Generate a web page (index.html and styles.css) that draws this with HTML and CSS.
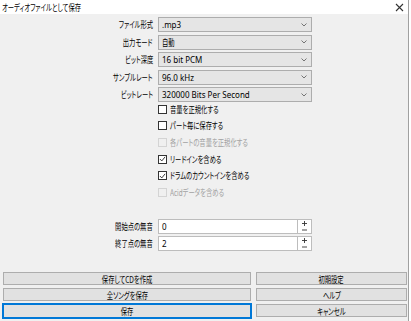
FILE: index.html
```html
<!DOCTYPE html>
<html lang="ja">
<head>
    <meta charset="UTF-8">
    <title>オーディオファイルとして保存</title>
    <link rel="stylesheet" href="styles.css">
</head>
<body>
    <div class="window">
        <div class="titlebar">
            <span class="title sq">オーディオファイルとして保存</span>
            <svg class="close" width="9" height="9" viewBox="0 0 9 9"><path d="M1 1L8 8M8 1L1 8" stroke="#333" stroke-width="1.1"/></svg>
        </div>
        <div class="content">
            <div class="form">
                <label class="label"><span class="sq">ファイル形式</span></label>
                <div class="select"><span>.mp3</span><svg class="chev" width="6" height="4" viewBox="0 0 6 4"><path d="M0.5 0.5L3 3L5.5 0.5" fill="none" stroke="#666" stroke-width="0.9"/></svg></div>
                <label class="label"><span class="sq">出力モード</span></label>
                <div class="select"><span class="sq">自動</span><svg class="chev" width="6" height="4" viewBox="0 0 6 4"><path d="M0.5 0.5L3 3L5.5 0.5" fill="none" stroke="#666" stroke-width="0.9"/></svg></div>
                <label class="label"><span class="sq">ビット深度</span></label>
                <div class="select"><span>16 bit PCM</span><svg class="chev" width="6" height="4" viewBox="0 0 6 4"><path d="M0.5 0.5L3 3L5.5 0.5" fill="none" stroke="#666" stroke-width="0.9"/></svg></div>
                <label class="label"><span class="sq">サンプルレート</span></label>
                <div class="select"><span>96.0 kHz</span><svg class="chev" width="6" height="4" viewBox="0 0 6 4"><path d="M0.5 0.5L3 3L5.5 0.5" fill="none" stroke="#666" stroke-width="0.9"/></svg></div>
                <label class="label"><span class="sq">ビットレート</span></label>
                <div class="select"><span>320000 Bits Per Second</span><svg class="chev" width="6" height="4" viewBox="0 0 6 4"><path d="M0.5 0.5L3 3L5.5 0.5" fill="none" stroke="#666" stroke-width="0.9"/></svg></div>
            </div>

            <div class="checks">
                <div class="check"><span class="box"></span><span class="sq">音量を正規化する</span></div>
                <div class="check"><span class="box"></span><span class="sq">パート毎に保存する</span></div>
                <div class="check disabled"><span class="box"></span><span class="sq">各パートの音量を正規化する</span></div>
                <div class="check"><span class="box"><svg width="8" height="8" viewBox="0 0 8 8"><path d="M1 4L3.2 6.2L7 1.5" fill="none" stroke="#222" stroke-width="1"/></svg></span><span class="sq">リードインを含める</span></div>
                <div class="check"><span class="box"><svg width="8" height="8" viewBox="0 0 8 8"><path d="M1 4L3.2 6.2L7 1.5" fill="none" stroke="#222" stroke-width="1"/></svg></span><span class="sq">ドラムのカウントインを含める</span></div>
                <div class="check disabled"><span class="box"></span><span class="sq">Acidデータを含める</span></div>
            </div>

            <div class="form spins">
                <label class="label"><span class="sq">開始点の無音</span></label>
                <div class="spin">
                    <span class="value">0</span>
                    <span class="arrows"><svg width="13" height="13" viewBox="0 0 13 13"><path d="M4 3.5H9M6.5 1V6M4 10H9" fill="none" stroke="#333" stroke-width="0.9"/></svg></span>
                </div>
                <label class="label"><span class="sq">終了点の無音</span></label>
                <div class="spin">
                    <span class="value">2</span>
                    <span class="arrows"><svg width="13" height="13" viewBox="0 0 13 13"><path d="M4 3.5H9M6.5 1V6M4 10H9" fill="none" stroke="#333" stroke-width="0.9"/></svg></span>
                </div>
            </div>

            <div class="buttons">
                <button class="btn"><span class="sq">保存してCDを作成</span></button>
                <button class="btn"><span class="sq">初期設定</span></button>
                <button class="btn"><span class="sq">全ソングを保存</span></button>
                <button class="btn"><span class="sq">ヘルプ</span></button>
                <button class="btn default"><span class="sq">保存</span></button>
                <button class="btn"><span class="sq">キャンセル</span></button>
            </div>
        </div>
    </div>
</body>
</html>
```

FILE: styles.css
```css
body {
    margin: 0;
    background-color: #fff;
    font-family: "Noto Sans", "Noto Sans CJK JP", sans-serif;
    font-size: 8px;
    font-feature-settings: "palt";
    color: #000;
}
/* the dialog text is narrow, squeeze the Japanese labels */
.sq {
    display: inline-block;
    font-size: 9px;
    line-height: 11px;
    transform: scaleX(0.7);
    transform-origin: left center;
    white-space: nowrap;
}
.window {
    width: 408px;
    height: 321px;
    border-right: 1px solid #a0a0a0;
    background-color: #f0f0f0;
    display: flex;
    flex-direction: column;
}
.titlebar {
    height: 14px;
    background-color: #fff;
    display: flex;
    align-items: center;
    justify-content: space-between;
    padding: 0 2px;
}
.close {
    margin-right: 2px;
}
.content {
    flex: 1;
    display: flex;
    flex-direction: column;
}
.form {
    display: grid;
    grid-template-columns: 153px 154px;
    column-gap: 5px;
    row-gap: 2.5px;
    margin-top: 3px;
    align-items: center;
}
.label {
    text-align: right;
    white-space: nowrap;
}
.label .sq {
    transform-origin: right center;
}
.select {
    height: 15px;
    box-sizing: border-box;
    border: 1px solid #adadad;
    background-color: #e5e5e5;
    display: flex;
    align-items: center;
    justify-content: space-between;
    padding: 0 4px 0 3px;
}
.checks {
    margin-left: 158px;
    margin-top: -1px;
}
.check {
    height: 16.6px;
    display: flex;
    align-items: center;
    white-space: nowrap;
}
.box {
    width: 9px;
    height: 9px;
    box-sizing: border-box;
    border: 1px solid #333;
    background-color: #fff;
    margin-right: 3px;
    display: flex;
    align-items: center;
    justify-content: center;
}
.check.disabled {
    color: #a2a2a2;
}
.check.disabled .box {
    border-color: #d4d4d4;
    background-color: #f0f0f0;
}
.spins {
    margin-top: 18px;
}
.spin {
    height: 15px;
    display: flex;
}
.value {
    flex: 1;
    box-sizing: border-box;
    border: 1px solid #bdbdbd;
    background-color: #fff;
    padding-left: 3px;
    line-height: 13px;
}
.arrows {
    width: 14px;
    box-sizing: border-box;
    border: 1px solid #bdbdbd;
    border-left: none;
    background-color: #fff;
    display: flex;
    align-items: center;
    justify-content: center;
}
.buttons {
    display: grid;
    grid-template-columns: 248px 151px;
    column-gap: 5px;
    row-gap: 3px;
    margin: auto 0 3px 3px;
}
.btn {
    height: 13px;
    padding: 0;
    border: 1px solid #adadad;
    background-color: #e1e1e1;
    font-family: inherit;
    font-feature-settings: "palt";
    color: #000;
    line-height: 11px;
}
.btn .sq {
    transform-origin: center center;
}
.btn.default {
    height: 14px;
    border-color: #0078d7;
    box-shadow: 0 0 0 1px #0078d7;
}
```
